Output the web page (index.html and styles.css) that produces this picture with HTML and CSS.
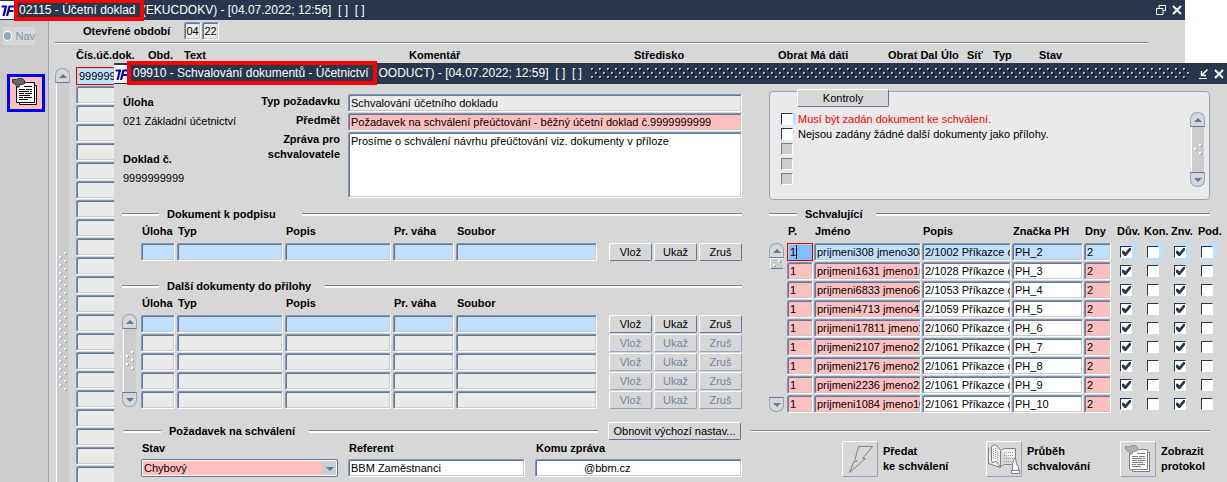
FILE: index.html
```html
<!DOCTYPE html>
<html lang="cs">
<head>
  <meta charset="UTF-8">
  <title>Schvalování dokumentů</title>
  <link rel="stylesheet" href="styles.css">
</head>
<body>
  <svg class="defs" aria-hidden="true">
    <defs>
      <symbol id="logo" viewBox="0 0 14 18">
        <rect width="14" height="18" fill="#fff"/>
        <path d="M1.500 5.500H7M6 5L3.500 15M7 15L9.500 5.500H14M8 10h5.500" stroke="#0000c8" stroke-width="2.200" fill="none"/>
      </symbol>
      <symbol id="close" viewBox="0 0 10 10">
        <path d="M1 1l8 8M9 1L1 9" stroke="#fff" stroke-width="2"/>
      </symbol>
      <symbol id="docs" viewBox="0 0 28 28">
        <path d="M8.500 7.500h17v19h-17z" fill="#fff" stroke="var(--ink)"/>
        <path d="M5.500 4.500h18v20h-18z" fill="#fff" stroke="var(--ink)"/>
        <path d="M1.500 1.500h4l2-1h4l2 2v3l-2 1h-3v2l-2 1-2-3-3-2z" fill="var(--hand)" stroke="var(--hand-edge)"/>
        <path d="M13 8.500h8M8 11.500h6M15 11.500h6M8 13.500h10M19 13.500h2M8 15.500h5M14 15.500h7M8 17.500h11M8 19.500h4M13 19.500h8M8 21.500h9" stroke="var(--ink)"/>
      </symbol>
      <pattern id="grip" width="8" height="8" patternUnits="userSpaceOnUse">
        <path d="M1 1h2v2H1zM5 5h2v2H5z" fill="#000"/>
        <path d="M0 0h2v1H1v1H0zM4 4h2v1H5v1H4z" fill="#b4c3d6"/>
        <path d="M1 1h1v1H1zM5 5h1v1H5z" fill="#7487a3"/>
      </pattern>
      <pattern id="dots" width="10" height="8" patternUnits="userSpaceOnUse">
        <path d="M6 1h2v2H6zM1 5h2v2H1z" fill="#94a6bd"/>
        <path d="M5 0h2v2H5zM0 4h2v2H0z" fill="#fff"/>
      </pattern>
    </defs>
  </svg>

  <div class="window back">
    <header class="titlebar">
      <svg class="logo"><use href="#logo"/></svg>
      <div class="title"><span class="marked">02115 - Účetní doklad</span> (EKUCDOKV) - [04.07.2022; 12:56]&nbsp; [ ]&nbsp; [ ]</div>
      <div class="win-buttons">
        <button aria-label="Obnovit okno"><svg width="10" height="10"><path d="M3 3V.5h6.500v5H7M.5 3.500H7v6H.5z" fill="none" stroke="#fff"/></svg></button>
        <button aria-label="Zavřít"><svg width="10" height="10"><use href="#close"/></svg></button>
      </div>
    </header>
    <div class="back-body">
      <aside class="sidebar">
        <label class="nav-radio"><input type="radio" disabled>Nav</label>
        <button class="side-btn" aria-label="Dokumenty"><svg width="28" height="28"><use href="#docs"/></svg></button>
      </aside>
      <main class="back-main">
        <div class="period">
          <span>Otevřené období</span>
          <input class="field grey" value="04" aria-label="Měsíc">
          <input class="field grey" value="22" aria-label="Rok">
        </div>
        <div class="back-grid">
          <div class="scrollbar tall">
            <button class="up" aria-label="Nahoru"></button>
            <div class="track"><svg width="8" height="140"><rect width="8" height="140" fill="url(#dots)"/></svg></div>
          </div>
          <table class="ledger">
            <colgroup><col class="w72"><col class="w36"><col class="w225"><col class="w225"><col class="w144"><col class="w110"><col class="w53"><col class="w26"><col class="w26"><col class="w46"><col></colgroup>
            <thead>
              <tr><th>Čís.úč.dok.</th><th>Obd.</th><th>Text</th><th>Komentář</th><th>Středisko</th><th>Obrat Má dáti</th><th>Obrat Dal</th><th>Úlo</th><th>Síť</th><th>Typ</th><th>Stav</th></tr>
            </thead>
            <tbody>
              <tr><td><input class="field blue current" value="9999999999" aria-label="Číslo dokladu"></td></tr>
              <tr><td><input class="field grey" aria-label="Číslo dokladu"></td></tr>
              <tr><td><input class="field grey" aria-label="Číslo dokladu"></td></tr>
              <tr><td><input class="field grey" aria-label="Číslo dokladu"></td></tr>
              <tr><td><input class="field grey" aria-label="Číslo dokladu"></td></tr>
              <tr><td><input class="field grey" aria-label="Číslo dokladu"></td></tr>
              <tr><td><input class="field grey" aria-label="Číslo dokladu"></td></tr>
              <tr><td><input class="field grey" aria-label="Číslo dokladu"></td></tr>
              <tr><td><input class="field grey" aria-label="Číslo dokladu"></td></tr>
              <tr><td><input class="field grey" aria-label="Číslo dokladu"></td></tr>
              <tr><td><input class="field grey" aria-label="Číslo dokladu"></td></tr>
              <tr><td><input class="field grey" aria-label="Číslo dokladu"></td></tr>
              <tr><td><input class="field grey" aria-label="Číslo dokladu"></td></tr>
              <tr><td><input class="field grey" aria-label="Číslo dokladu"></td></tr>
              <tr><td><input class="field grey" aria-label="Číslo dokladu"></td></tr>
              <tr><td><input class="field grey" aria-label="Číslo dokladu"></td></tr>
              <tr><td><input class="field grey" aria-label="Číslo dokladu"></td></tr>
              <tr><td><input class="field grey" aria-label="Číslo dokladu"></td></tr>
              <tr><td><input class="field grey" aria-label="Číslo dokladu"></td></tr>
              <tr><td><input class="field grey" aria-label="Číslo dokladu"></td></tr>
              <tr><td><input class="field grey" aria-label="Číslo dokladu"></td></tr>
              <tr><td><input class="field grey" aria-label="Číslo dokladu"></td></tr>
              <tr><td><input class="field grey" aria-label="Číslo dokladu"></td></tr>
              <tr><td><input class="field grey" aria-label="Číslo dokladu"></td></tr>
              <tr><td><input class="field grey" aria-label="Číslo dokladu"></td></tr>
              <tr><td><input class="field grey" aria-label="Číslo dokladu"></td></tr>
            </tbody>
          </table>
        </div>
      </main>
    </div>
  </div>

  <div class="window front">
    <header class="titlebar">
      <svg class="logo"><use href="#logo"/></svg>
      <div class="title"><span class="marked gap">09910 - Schvalování dokumentů - Účetnictví</span>OODUCT) - [04.07.2022; 12:59]&nbsp; [ ]&nbsp; [ ]</div>
      <svg class="grip"><rect width="100%" height="11" fill="url(#grip)"/></svg>
      <div class="win-buttons">
        <button aria-label="Minimalizovat"><svg width="10" height="10"><path d="M9.500.5L4 6M3.500 2v4.500H8" fill="none" stroke="#fff" stroke-width="1.500"/><path d="M1 9.500h8" stroke="#fff"/></svg></button>
        <button aria-label="Zavřít"><svg width="10" height="10"><use href="#close"/></svg></button>
      </div>
    </header>

    <div class="front-body">
      <section class="request">
        <dl class="info">
          <dt>Úloha</dt><dd>021 Základní účetnictví</dd>
          <dt>Doklad č.</dt><dd>9999999999</dd>
        </dl>
        <div class="request-form">
          <label for="type">Typ požadavku</label>
          <input class="field grey" id="type" value="Schvalování účetního dokladu">
          <label for="subject">Předmět</label>
          <input class="field pink" id="subject" value="Požadavek na schválení přeúčtování - běžný účetní doklad č.9999999999">
          <label for="message">Zpráva pro<br>schvalovatele</label>
          <textarea class="field" id="message">Prosíme o schválení návrhu přeúčtování viz. dokumenty v příloze</textarea>
        </div>
      </section>

      <section class="checks">
        <button class="btn checks-btn">Kontroly</button>
        <div class="checks-body">
          <ul>
            <li class="error"><label><input class="tick active" type="checkbox">Musí být zadán dokument ke schválení.</label></li>
            <li><label><input class="tick" type="checkbox">Nejsou zadány žádné další dokumenty jako přílohy.</label></li>
            <li><input class="tick" type="checkbox" disabled aria-label="Kontrola 3"></li>
            <li><input class="tick" type="checkbox" disabled aria-label="Kontrola 4"></li>
            <li><input class="tick" type="checkbox" disabled aria-label="Kontrola 5"></li>
          </ul>
          <div class="scrollbar">
            <button class="up" aria-label="Nahoru"></button>
            <div class="track"><svg width="8" height="12"><rect width="8" height="12" fill="url(#dots)"/></svg></div>
            <button class="down" aria-label="Dolů"></button>
          </div>
        </div>
      </section>

      <section class="documents">
        <h2 class="wide">Dokument k podpisu</h2>
        <div class="doc-grid">
          <table class="docs">
            <colgroup><col class="w36"><col class="w108"><col class="w108"><col class="w63"><col><col class="w45"><col class="w45"><col class="w43"></colgroup>
            <thead><tr><th>Úloha</th><th>Typ</th><th>Popis</th><th>Pr. váha</th><th>Soubor</th><th colspan="3"></th></tr></thead>
            <tbody>
              <tr><td><input class="field blue" aria-label="Úloha"></td><td><input class="field blue" aria-label="Typ"></td><td><input class="field blue" aria-label="Popis"></td><td><input class="field blue" aria-label="Pr. váha"></td><td class="file"><input class="field blue" aria-label="Soubor"></td><td><button class="btn">Vlož</button></td><td><button class="btn">Ukaž</button></td><td><button class="btn">Zruš</button></td></tr>
            </tbody>
          </table>
        </div>

        <h2 class="second">Další dokumenty do přílohy</h2>
        <div class="doc-grid">
          <div class="scrollbar">
            <button class="up" aria-label="Nahoru"></button>
            <div class="track"><svg width="8" height="20"><rect width="8" height="20" fill="url(#dots)"/></svg></div>
            <button class="down" aria-label="Dolů"></button>
          </div>
          <table class="docs">
            <colgroup><col class="w36"><col class="w108"><col class="w108"><col class="w63"><col><col class="w45"><col class="w45"><col class="w43"></colgroup>
            <thead><tr><th>Úloha</th><th>Typ</th><th>Popis</th><th>Pr. váha</th><th>Soubor</th><th colspan="3"></th></tr></thead>
            <tbody>
              <tr><td><input class="field blue" aria-label="Úloha"></td><td><input class="field blue" aria-label="Typ"></td><td><input class="field blue" aria-label="Popis"></td><td><input class="field blue" aria-label="Pr. váha"></td><td class="file"><input class="field blue" aria-label="Soubor"></td><td><button class="btn">Vlož</button></td><td><button class="btn">Ukaž</button></td><td><button class="btn">Zruš</button></td></tr>
              <tr><td><input class="field grey" aria-label="Úloha"></td><td><input class="field grey" aria-label="Typ"></td><td><input class="field grey" aria-label="Popis"></td><td><input class="field grey" aria-label="Pr. váha"></td><td class="file"><input class="field grey" aria-label="Soubor"></td><td><button class="btn" disabled>Vlož</button></td><td><button class="btn" disabled>Ukaž</button></td><td><button class="btn" disabled>Zruš</button></td></tr>
              <tr><td><input class="field grey" aria-label="Úloha"></td><td><input class="field grey" aria-label="Typ"></td><td><input class="field grey" aria-label="Popis"></td><td><input class="field grey" aria-label="Pr. váha"></td><td class="file"><input class="field grey" aria-label="Soubor"></td><td><button class="btn" disabled>Vlož</button></td><td><button class="btn" disabled>Ukaž</button></td><td><button class="btn" disabled>Zruš</button></td></tr>
              <tr><td><input class="field grey" aria-label="Úloha"></td><td><input class="field grey" aria-label="Typ"></td><td><input class="field grey" aria-label="Popis"></td><td><input class="field grey" aria-label="Pr. váha"></td><td class="file"><input class="field grey" aria-label="Soubor"></td><td><button class="btn" disabled>Vlož</button></td><td><button class="btn" disabled>Ukaž</button></td><td><button class="btn" disabled>Zruš</button></td></tr>
              <tr><td><input class="field grey" aria-label="Úloha"></td><td><input class="field grey" aria-label="Typ"></td><td><input class="field grey" aria-label="Popis"></td><td><input class="field grey" aria-label="Pr. váha"></td><td class="file"><input class="field grey" aria-label="Soubor"></td><td><button class="btn" disabled>Vlož</button></td><td><button class="btn" disabled>Ukaž</button></td><td><button class="btn" disabled>Zruš</button></td></tr>
            </tbody>
          </table>
        </div>
      </section>

      <section class="approvers">
        <h2>Schvalující</h2>
        <div class="approver-grid">
          <div class="scrollbar loose">
            <button class="up" aria-label="Nahoru"></button>
            <div class="thumb"><svg width="8" height="7"><rect width="8" height="7" fill="url(#dots)"/></svg></div>
            <button class="down" aria-label="Dolů"></button>
          </div>
          <table class="people">
            <colgroup><col class="w27"><col class="w108"><col class="w90"><col class="w72"><col class="w35"><col class="w27"><col class="w27"><col class="w27"><col></colgroup>
            <thead><tr><th>P.</th><th>Jméno</th><th>Popis</th><th>Značka PH</th><th>Dny</th><th class="flag">Dův.</th><th class="flag">Kon.</th><th class="flag">Znv.</th><th class="flag">Pod.</th></tr></thead>
            <tbody id="people"></tbody>
          </table>
        </div>
      </section>
    </div>

    <div class="footer-head">
      <h2>Požadavek na schválení</h2>
      <button class="btn">Obnovit výchozí nastav...</button>
      <hr>
    </div>
    <footer class="footer">
      <div class="footer-form">
        <div>
          <label for="state">Stav</label>
          <div class="select"><select id="state"><option>Chybový</option></select></div>
        </div>
        <div>
          <label for="referent">Referent</label>
          <input class="field" id="referent" value="BBM Zaměstnanci">
        </div>
        <div>
          <label for="mail">Komu zpráva</label>
          <input class="field mail" id="mail" value="@bbm.cz">
        </div>
      </div>
      <div class="actions">
        <div class="action">
          <button class="icon-btn" id="send" aria-label="Předat ke schválení"><svg width="34" height="34"><path d="M15.500 4.500h14L19.500 16.500h3L6.500 30.500l4.500-11h3l-2-2z" fill="none" stroke="#808080"/></svg></button>
          <label for="send">Předat<br>ke schválení</label>
        </div>
        <div class="action">
          <button class="icon-btn" id="progress" aria-label="Průběh schvalování"><svg width="34" height="34"><path d="M1.500 5.500v16l12 4V8.500l-5-6-4 2v15M13.500 25.500l-4-6-5 1" fill="#f0f0f0" stroke="#808080"/><path d="M13.500 8.500l4-2H28.500v14M13.500 24.500l4-2h7" fill="#f0f0f0" stroke="#808080"/><path d="M6.500 7v10M8.500 6v11M10.500 9v9M17 10.500h9M17 13.500h9M17 16.500h9M17 19.500h7" stroke="#999" stroke-dasharray="1 1"/><path d="M25.500 28v-6l2-6h1l1 6 2 3v3M24.500 28.500h8v3h-8z" fill="#fff" stroke="#808080"/></svg></button>
          <label for="progress">Průběh<br>schvalování</label>
        </div>
        <div class="action">
          <button class="icon-btn" id="log" aria-label="Zobrazit protokol"><svg width="28" height="28"><use href="#docs"/></svg></button>
          <label for="log">Zobrazit<br>protokol</label>
        </div>
      </div>
    </footer>
  </div>

  <script src="people.js"></script>
</body>
</html>
```

FILE: people.js
```js
const people = [
  ['prijmeni308 jmeno308', '2/1002 Příkazce operace', 'PH_2'],
  ['prijmeni1631 jmeno1631', '2/1028 Příkazce operace', 'PH_3'],
  ['prijmeni6833 jmeno6833', '2/1053 Příkazce operace', 'PH_4'],
  ['prijmeni4713 jmeno4713', '2/1059 Příkazce operace', 'PH_5'],
  ['prijmeni17811 jmeno17811', '2/1060 Příkazce operace', 'PH_6'],
  ['prijmeni2107 jmeno2107', '2/1061 Příkazce operace', 'PH_7'],
  ['prijmeni2176 jmeno2176', '2/1061 Příkazce operace', 'PH_8'],
  ['prijmeni2236 jmeno2236', '2/1061 Příkazce operace', 'PH_9'],
  ['prijmeni1084 jmeno1084', '2/1061 Příkazce operace', 'PH_10']
];

function field(value, cls, label) {
  return `<td><input class="field ${cls}" value="${value}" aria-label="${label}"></td>`;
}

function tick(checked, active, label) {
  return `<td><input class="tick ${active ? 'active' : ''}" type="checkbox" ${checked ? 'checked' : ''} aria-label="${label}"></td>`;
}

document.getElementById('people').innerHTML = people.map(([name, desc, mark], i) => {
  const first = i === 0;
  return '<tr>' +
    field('1', first ? 'current selected' : 'pink', 'P.') +
    field(name, first ? 'blue' : 'pink', 'Jméno') +
    field(desc, first ? 'blue' : '', 'Popis') +
    field(mark, first ? 'blue' : '', 'Značka PH') +
    field('2', first ? 'blue days' : 'pink days', 'Dny') +
    tick(true, first, 'Dův.') +
    tick(false, first, 'Kon.') +
    tick(true, first, 'Znv.') +
    tick(false, first, 'Pod.') +
    '</tr>';
}).join('');
```

FILE: styles.css
```css
* { box-sizing: border-box; }

html, body {
  margin: 0;
  height: 100%;
  overflow: hidden;
}
body {
  position: relative;
  background: #fff;
  color: #000;
  font: 11px/15px "Liberation Sans", Arial, sans-serif;
}
button, input, textarea, select {
  font: inherit;
  color: inherit;
  margin: 0;
  border-radius: 0;
}
.defs { position: absolute; width: 0; height: 0; }

/* windows */
.window { background: #d7d7d7; }
.back {
  height: 100%;
  margin-right: 42px;
  display: flex;
  flex-direction: column;
}
.front {
  position: absolute;
  top: 63px;
  left: 114px;
  right: 0;
  bottom: 0;
}
.titlebar {
  display: flex;
  align-items: center;
  height: 20px;
  flex: none;
  background: #28374d;
  color: #fff;
}
.front .titlebar { height: 21px; }
.logo { width: 14px; height: 18px; flex: none; }
.title {
  flex: none;
  margin-left: 5px;
  font-size: 12px;
  white-space: nowrap;
}
.marked { position: relative; padding-right: 3px; }
.marked::after {
  content: "";
  position: absolute;
  inset: -4px -5px;
  border: 4px solid #f00;
}
.marked.gap { margin-right: 7px; }
.marked.gap::after { inset: -5px -6px; }
.grip { flex: 1; height: 11px; margin-left: 9px; }
.win-buttons {
  display: flex;
  gap: 6px;
  margin-left: auto;
  padding: 0 3px 0 9px;
}
.win-buttons button {
  display: flex;
  padding: 0;
  border: 0;
  background: none;
}

/* back window */
.back-body { flex: 1; display: flex; min-height: 0; }
.sidebar {
  width: 49px;
  flex: none;
  padding: 7px 0 0 3px;
  background: #ccc;
  border-right: 1px solid #94a6bd;
}
.nav-radio {
  display: flex;
  align-items: center;
  width: 32px;
  height: 18px;
  background: #d7d7d7;
  color: #8496b0;
}
.nav-radio input {
  appearance: none;
  width: 10px;
  height: 10px;
  margin-right: 3px;
  border: 1px solid #fff;
  border-radius: 50%;
  background: #94a6bd;
}
.side-btn {
  display: flex;
  width: 38px;
  height: 38px;
  margin: 29px 0 0 4px;
  padding: 1px;
  border: 3px solid #00f;
  background: #ffbfbf;
  --ink: #000;
  --hand: #666;
  --hand-edge: #333;
}
.back-main { flex: 1; min-width: 0; padding-left: 6px; }
.period {
  display: flex;
  align-items: center;
  height: 23px;
  margin-right: 37px;
  padding-left: 28px;
  border-bottom: 1px solid #808080;
  box-shadow: 0 1px #fff;
  font-weight: bold;
}
.period span { margin-right: 14px; }
.period .field { width: 17px; margin-right: 1px; padding-left: 1px; font-weight: normal; }
.back-grid { display: flex; gap: 6px; margin-top: 3px; }
.scrollbar.tall { margin-top: 22px; }
.ledger { flex: 1; }

/* fields */
.field {
  display: block;
  width: 100%;
  height: 18px;
  padding: 0 0 0 2px;
  border: 1px solid;
  border-color: #8496b3 #fff #fff #8496b3;
  border-radius: 2px;
  box-shadow: inset 1px 1px #637899, inset -1px -1px #ccc;
  background: #fff;
  outline: none;
}
.field.grey { background: #eaeaea; }
.field.blue { background: #bfdfff; }
.field.pink { background: #ffbfbf; }
.field.current {
  border: 1px solid #e00000;
  border-radius: 0;
  box-shadow: inset 1px 1px #ccc;
}
/* selected value with the caret behind it */
.field.selected {
  background: linear-gradient(#000, #000) 8px 1px / 1px 14px no-repeat, #80bfff;
}
textarea.field { height: 66px; padding-top: 1px; resize: none; }

.btn {
  display: block;
  width: 100%;
  height: 18px;
  padding: 0;
  border: 1px solid;
  border-color: #fff #637899 #637899 #fff;
  border-radius: 2px;
  background: #d7d7d7;
  line-height: 16px;
  white-space: nowrap;
}
.btn:disabled {
  color: #7487a3;
  border-color: #fff #94a6bd #94a6bd #fff;
}

.tick {
  appearance: none;
  display: block;
  flex: none;
  width: 12px;
  height: 12px;
  border: 1px solid;
  border-color: #28374d #fff #fff #28374d;
  background: #fff;
}
.tick:disabled { background: #ccc; border-color: #808080 #fff #fff #808080; }
.tick.active {
  box-shadow: 0 -3px #bfdfff, 5px -3px #bfdfff, 0 3px #bfdfff, 5px 3px #bfdfff;
}
.checks .tick.active { box-shadow: 3px 0 #bfdfff; }
.tick:checked::before {
  content: "";
  display: block;
  width: 9px;
  height: 8px;
  margin: 1px 0 0 1px;
  background: #28374d;
  clip-path: polygon(0 35%, 22% 35%, 38% 55%, 80% 0, 100% 0, 100% 25%, 45% 100%, 28% 100%, 0 65%);
}

/* tables */
table {
  width: 100%;
  min-width: 0;
  table-layout: fixed;
  border-collapse: collapse;
}
th {
  height: 21px;
  padding: 2px 0 0 1px;
  text-align: left;
  vertical-align: top;
  white-space: nowrap;
}
td { height: 19px; padding: 0 2px 1px 0; vertical-align: top; }
.w26 { width: 26px; }
.w27 { width: 27px; }
.w35 { width: 35px; }
.w36 { width: 36px; }
.w43 { width: 43px; }
.w45 { width: 45px; }
.w46 { width: 46px; }
.w53 { width: 53px; }
.w63 { width: 63px; }
.w72 { width: 72px; }
.w90 { width: 90px; }
.w108 { width: 108px; }
.w110 { width: 110px; }
.w144 { width: 144px; }
.w225 { width: 225px; }
.ledger th { padding-left: 0; }
.docs td:last-child { padding-right: 0; }
.docs td.file { padding-right: 12px; }
.people td { padding-right: 1px; }
.people .tick { margin: 3px 0 0 1px; }
.people .days { width: 27px; }
.people th.flag { padding-left: 0; text-indent: -2px; }

/* scrollbars */
.scrollbar {
  display: flex;
  flex-direction: column;
  width: 15px;
  flex: none;
}
.scrollbar button {
  height: 15px;
  padding: 0;
  border: 1px solid #94a6bd;
  background: #d7d7d7;
  display: flex;
  align-items: center;
  justify-content: center;
}
.scrollbar .up { border-radius: 7px 7px 0 0; border-bottom-color: #637899; }
.scrollbar .down { border-radius: 0 0 7px 7px; border-top-color: #637899; }
.scrollbar button::before {
  content: "";
  border: 4px solid transparent;
}
.scrollbar .up::before { border-top: 0; border-bottom-color: #637899; }
.scrollbar .down::before { border-bottom: 0; border-top-color: #637899; }
.track, .thumb {
  display: flex;
  align-items: center;
  justify-content: center;
  background: #ccc;
  border-left: 1px solid #fff;
  margin: 0 1px;
}
.track { flex: 1; }
.thumb { height: 11px; border-bottom: 1px solid #637899; border-top: 1px solid #fff; }
.scrollbar.loose .down { margin-top: auto; }

/* front window */
.front-body {
  display: grid;
  grid-template-columns: 1fr 458px;
  column-gap: 27px;
  padding: 5px 0 0 8px;
}
.request { display: flex; align-items: flex-start; padding-top: 5px; }
.info { width: 125px; flex: none; margin: 0; padding: 1px 0 0 1px; }
.info dt { font-weight: bold; }
.info dd { margin: 4px 0 23px; white-space: nowrap; }
.info dd:last-child { margin-bottom: 0; }
.request-form {
  flex: 1;
  display: grid;
  grid-template-columns: 93px 1fr;
  gap: 1px 8px;
}
.request-form label { font-weight: bold; text-align: right; }
.checks {
  height: 109px;
  margin: 2px 17px 0 0;
  padding: 0 4px 0 11px;
  border: 1px solid #94a6bd;
  border-radius: 4px;
  background: #eaeaea;
}
.checks-btn { width: 92px; margin: -3px 0 0 16px; }
.checks-body { display: flex; justify-content: space-between; margin-top: 5px; }
.checks ul { list-style: none; margin: 0; padding: 0; }
.checks li { height: 15px; padding-top: 1px; }
.checks label { display: flex; gap: 5px; line-height: 13px; white-space: nowrap; }
.error { color: #f00; }
.checks .scrollbar { height: 75px; }

h2 {
  display: flex;
  align-items: center;
  gap: 8px;
  height: 15px;
  margin: 0;
  font-size: 11px;
  white-space: nowrap;
}
h2::before, h2::after, hr {
  content: "";
  height: 2px;
  margin: 0;
  border: 0;
  border-top: 1px solid #808080;
  background: #fff;
}
h2::before { width: 37px; }
h2::after { flex: 1; margin-left: 6px; }
h2.wide::after { margin-left: 18px; }
.documents, .approvers { padding-top: 7px; }
.doc-grid, .approver-grid { display: flex; }
.doc-grid { padding-left: 19px; }
.doc-grid .scrollbar { margin: 20px 4px 0 -19px; height: 93px; }
h2.second { margin-top: 17px; }
.approvers h2 { margin-right: 17px; }
.approvers h2::before { width: 28px; }
.approver-grid { gap: 3px; }
.approver-grid .scrollbar { margin-top: 21px; height: 169px; }

.footer-head {
  display: grid;
  grid-template-columns: 1fr 133px 459px;
  align-items: center;
  column-gap: 10px;
  padding: 8px 17px 0 10px;
}
.footer {
  display: grid;
  grid-template-columns: 1fr 385px;
  column-gap: 100px;
  padding-left: 27px;
}
.footer label { font-weight: bold; white-space: nowrap; }
.footer-form { display: grid; grid-template-columns: 197px 177px 1fr; gap: 10px; }
.footer-form label { display: block; padding-left: 1px; height: 19px; line-height: 17px; }
.field.mail { padding-left: 48px; }
.select { position: relative; }
.select select {
  appearance: none;
  display: block;
  width: 100%;
  height: 18px;
  padding: 0 2px;
  border: 1px solid #637899;
  border-radius: 2px;
  box-shadow: inset 0 0 0 1px #fff;
  background: linear-gradient(#ccc, #ccc) right / 15px 100% no-repeat, #ffbfbf;
}
.select::after {
  content: "";
  position: absolute;
  top: 8px;
  right: 4px;
  border: 4px solid transparent;
  border-top-color: #637899;
  border-bottom: 0;
}
.actions { display: grid; grid-template-columns: 144px 134px 1fr; padding-top: 1px; }
.action { display: flex; gap: 5px; }
.action label { padding-top: 3px; }
.icon-btn {
  display: flex;
  align-items: center;
  justify-content: center;
  width: 36px;
  height: 36px;
  padding: 0;
  border: 1px solid;
  border-color: #fff #94a6bd #94a6bd #fff;
  border-radius: 2px;
  background: #d7d7d7;
  --ink: #808080;
  --hand: #b0b0b0;
  --hand-edge: #999;
}
```
